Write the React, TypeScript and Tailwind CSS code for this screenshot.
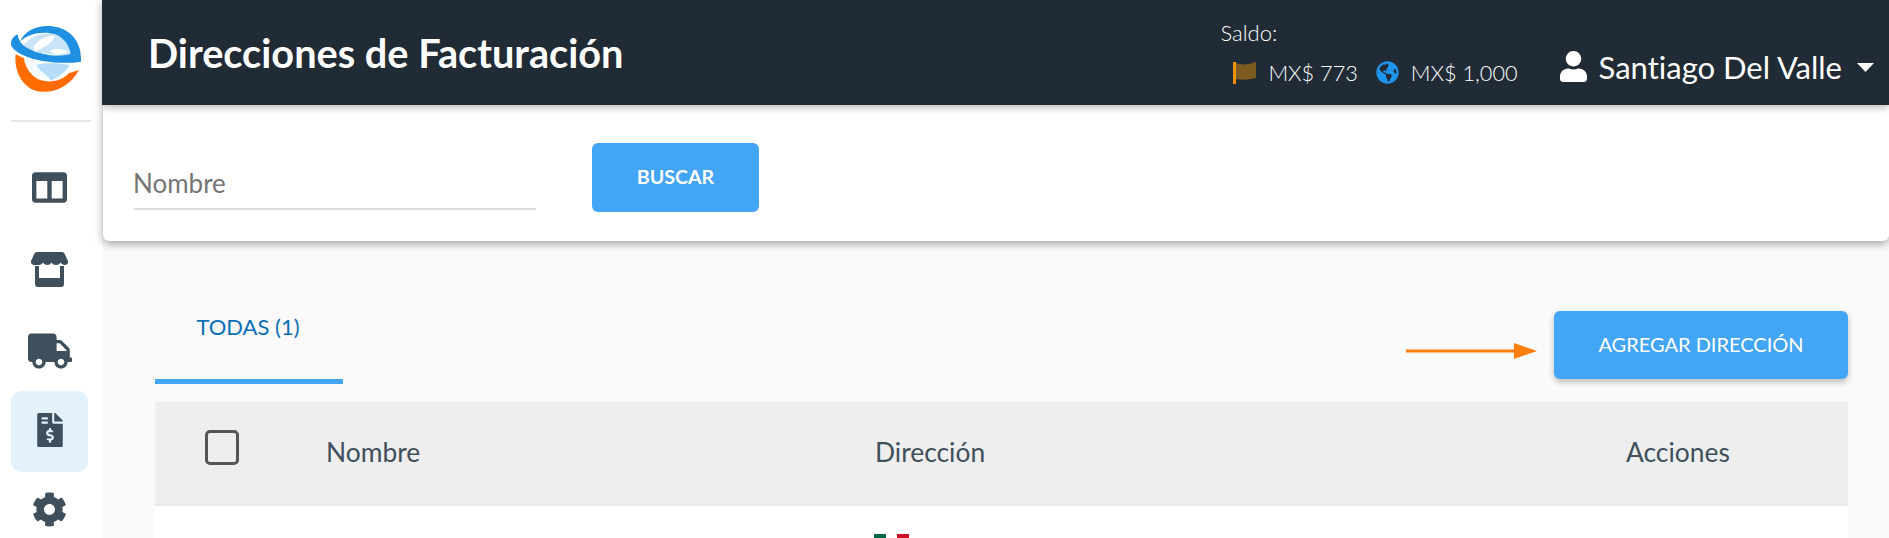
import React from 'react'
import { FaColumns, FaTruck, FaFileInvoiceDollar, FaCog, FaGlobeAmericas, FaUser } from 'react-icons/fa'

const Logo = () => (
  <svg viewBox="0 0 306 360" className="w-[102px] h-[120px] block">
    {/* globe */}
    <circle cx="145" cy="165" r="70" fill="#f4fafe" />
    <path d="M70 135 C105 95 160 90 195 122 C208 135 212 150 214 168 L80 155 Z" fill="#c9e4f9" />
    <path d="M108 195 C130 188 170 188 208 195 C200 215 175 232 152 242 C145 225 120 215 108 195 Z" fill="#b5dcf8" />
    <path d="M100 140 C120 112 145 108 165 108 C160 128 128 145 105 155 Z" fill="#fff" />
    <path d="M150 152 C170 142 190 148 208 155 L170 166 Z" fill="#fff" />
    {/* orange lower arc */}
    <path d="M47 163 C42 205 60 252 100 270 C148 287 208 265 237 210 L206 220 C185 245 145 250 115 238 C90 225 74 198 72 175 Z" fill="#ff6d00" />
    {/* blue swoosh */}
    <path d="M52 103 C38 112 30 125 35 138 C45 158 85 175 130 183 C170 190 210 190 243 185 C245 150 232 115 205 97 C175 74 125 72 92 90 C78 98 66 110 60 125 C56 118 53 110 52 103 Z M60 125 C72 145 110 160 145 165 C170 168 190 167 212 162 C208 135 190 112 165 103 C130 92 85 100 60 125 Z" fill="#1e8fe1" fillRule="evenodd" />
    <path d="M52 103 C38 112 30 125 35 138 C45 158 85 175 130 183 L145 165 C110 160 72 145 60 125 C56 118 53 110 52 103 Z" fill="#1e8fe1" />
  </svg>
)

const StoreIcon = () => (
  <svg viewBox="0 0 37 35" className="w-[37px] h-[35px]" fill="#3f4f5c">
    <path d="M6 0 H31 C32.5 0 33.5 1 34 2.5 L37 9 C37.4 11.5 36 13 34 13 C32 13 30.5 12 29.6 10.5 C28.8 12.2 27 13 25 13 C23 13 21.4 12.2 20.5 10.5 C19.6 12.2 18 13 16.5 13 C14.5 13 12.8 12.2 12 10.5 C11 12.2 9.5 13 7.5 13 H3 C1 13 -0.4 11.5 0 9 L3 2.5 C3.5 1 4.5 0 6 0 Z" />
    <path fillRule="evenodd" d="M4 14 H8 V26 H29 V14 H33 V32 C33 33.8 32 35 30 35 H7 C5 35 4 33.8 4 32 Z" />
  </svg>
)

const FlagIcon = () => (
  <svg viewBox="0 0 23 22" className="mr-[12px] h-[22px] w-[23px]">
    <rect x="0" y="0" width="3" height="22" fill="#f59300" />
    <path d="M3 1 C8 3 15 3 23 0 V16 C15 18 8 18 3 17 Z" fill="#7c5a20" />
  </svg>
)

const items = [
  { icon: <FaColumns className="w-[35px] h-[35px] mt-[-2px]" />, active: false },
  { icon: <StoreIcon />, active: false },
  { icon: <FaTruck className="w-[44px] h-[44px]" />, active: false },
  { icon: <FaFileInvoiceDollar className="w-[34px] h-[34px] mt-[-4px]" />, active: true },
  { icon: <FaCog className="w-[35px] h-[35px] mt-[-6px]" />, active: false },
]

export default function App() {
  return (
    <div className="flex h-[538px] w-[1889px] overflow-hidden bg-[#fafafa] font-['Lato','Noto_Sans',sans-serif] text-[#3f4f5c] [font-variant-ligatures:none]">
      <aside className="w-[102px] shrink-0 bg-white">
        <Logo />
        <div className="mx-[11px] h-[2px] bg-[#e5e5e5]" />
        <nav className="mt-[26px] flex flex-col">
          {items.map((it, i) => (
            <div
              key={i}
              className={`mx-[11px] flex h-[81px] w-[77px] shrink-0 items-center justify-center rounded-[10px] ${it.active ? 'bg-[#e3f2fd]' : ''}`}
            >
              {it.icon}
            </div>
          ))}
        </nav>
      </aside>

      <main className="flex min-w-0 flex-1 flex-col">
        <header className="relative z-20 flex h-[105px] shrink-0 items-center justify-between bg-[#212b36] pl-[46px] pr-[15px] text-white shadow-[0_2px_8px_rgba(0,0,0,0.3)]">
          <h1 className="text-[39.7px] font-bold leading-none">Direcciones de Facturación</h1>
          <div className="flex items-end">
            <div className="mr-[42px] flex flex-col">
              <span className="text-[22px] font-light leading-[24px]">Saldo:</span>
              <div className="mt-[16px] ml-[13px] flex items-center text-[21.7px] font-light leading-[24px]">
                <FlagIcon />
                <span>MX$ 773</span>
                <FaGlobeAmericas className="ml-[18px] mr-[12px] h-[23px] w-[23px] text-[#1e96f0]" />
                <span>MX$ 1,000</span>
              </div>
            </div>
            <div className="flex items-center">
              <FaUser className="h-[31px] w-[27px]" />
              <span className="ml-[12px] text-[31px] leading-[36px]">Santiago Del Valle</span>
              <svg viewBox="0 0 17 9" className="ml-[15px] mt-[2px] h-[9px] w-[17px]">
                <path d="M0 0 H17 L8.5 9 Z" fill="#fff" />
              </svg>
            </div>
          </div>
        </header>

        <section className="relative z-10 ml-[1px] flex h-[136px] shrink-0 items-start rounded-b-[6px] bg-white pl-[31px] shadow-[0_3px_9px_rgba(0,0,0,0.35)]">
          <div className="mt-[52px] flex h-[53px] w-[402px] items-start border-b-2 border-[#dcdcdc] pt-[8px] text-[26px] leading-[36px] text-[#757575]">
            <span className="ml-[-1px]">Nombre</span>
          </div>
          <button className="ml-[56px] mt-[38px] h-[69px] w-[167px] rounded-[6px] bg-[#42a5f5] pb-[2px] text-[19.6px] font-bold text-white">
            BUSCAR
          </button>
        </section>

        <section className="flex flex-1 flex-col pl-[53px] pr-[41px]">
          <div className="flex h-[161px] items-start justify-between">
            <div className="mt-[43px] flex h-[100px] w-[188px] flex-col items-center border-b-[5px] border-[#42a5f5] pt-[25px] pr-[2px] text-[22px] leading-[36px] text-[#0b6fb8]">
              TODAS (1)
            </div>
            <div className="mt-[70px] flex items-center">
              <svg viewBox="0 0 131 16" className="mr-[17px] mt-[12px] h-[16px] w-[131px]">
                <rect x="0" y="6.5" width="108" height="3" fill="#ff7f0e" />
                <path d="M108 0 L131 8 L108 16 Z" fill="#ff7f0e" />
              </svg>
              <button className="h-[68px] w-[294px] rounded-[6px] bg-[#42a5f5] pb-[3px] text-[20px] text-white shadow-[0_3px_6px_rgba(0,0,0,0.25)]">
                AGREGAR DIRECCIÓN
              </button>
            </div>
          </div>

          <div className="grid h-[104px] grid-cols-[172px_548px_680px_1fr] items-center border-b-[3px] border-[#e8eaec] bg-[#eeeeee] text-[26.4px]">
            <div className="pl-[50px]">
              <div className="mt-[-10px] h-[35px] w-[34px] rounded-[5px] border-[3px] border-[#555]" />
            </div>
            <span className="ml-[-1px]">Nombre</span>
            <span>Dirección</span>
            <span className="pl-[71px]">Acciones</span>
          </div>

          <div className="flex flex-1 justify-start bg-white">
            <div className="ml-[719px] mt-[28px] flex h-[12px] w-[35px]">
              <div className="w-[12px] bg-[#006847]" />
              <div className="w-[11px] bg-white" />
              <div className="w-[12px] bg-[#ce1126]" />
            </div>
          </div>
        </section>
      </main>
    </div>
  )
}
